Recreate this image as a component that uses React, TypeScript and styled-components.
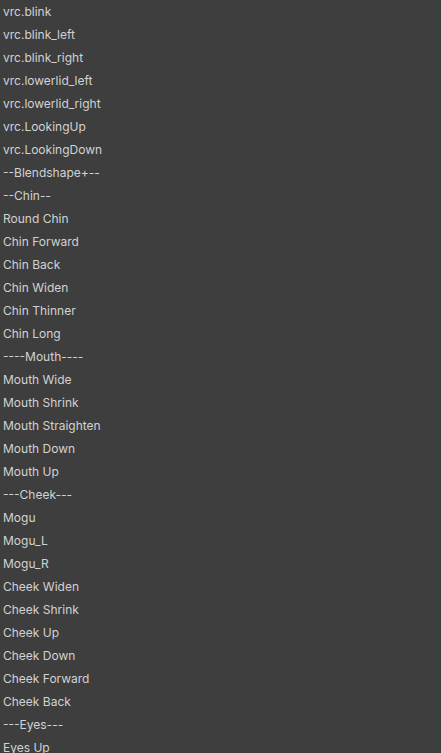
import React from "react";
import styled, { createGlobalStyle } from "styled-components";

const Global = createGlobalStyle`
  html, body { margin: 0; padding: 0; background: #3e3e3e; }
  body { width: 441px; height: 753px; overflow: hidden; }
`;

const List = styled.div`
  display: flex;
  flex-direction: column;
  background: #3e3e3e;
  min-height: 753px;
`;

const Row = styled.div`
  height: 23px;
  display: flex;
  align-items: center;
  padding-left: 3px;
  font-family: Inter, "Noto Sans", sans-serif;
  font-size: 12px;
  color: #d2d2d2;
  white-space: nowrap;
`;

const items = [
  "vrc.blink",
  "vrc.blink_left",
  "vrc.blink_right",
  "vrc.lowerlid_left",
  "vrc.lowerlid_right",
  "vrc.LookingUp",
  "vrc.LookingDown",
  "--Blendshape+--",
  "--Chin--",
  "Round Chin",
  "Chin Forward",
  "Chin Back",
  "Chin Widen",
  "Chin Thinner",
  "Chin Long",
  "----Mouth----",
  "Mouth Wide",
  "Mouth Shrink",
  "Mouth Straighten",
  "Mouth Down",
  "Mouth Up",
  "---Cheek---",
  "Mogu",
  "Mogu_L",
  "Mogu_R",
  "Cheek Widen",
  "Cheek Shrink",
  "Cheek Up",
  "Cheek Down",
  "Cheek Forward",
  "Cheek Back",
  "---Eyes---",
  "Eyes Up",
];

export default function App() {
  return (
    <>
      <Global />
      <List>
        {items.map((t, i) => (
          <Row key={i}>{t}</Row>
        ))}
      </List>
    </>
  );
}
